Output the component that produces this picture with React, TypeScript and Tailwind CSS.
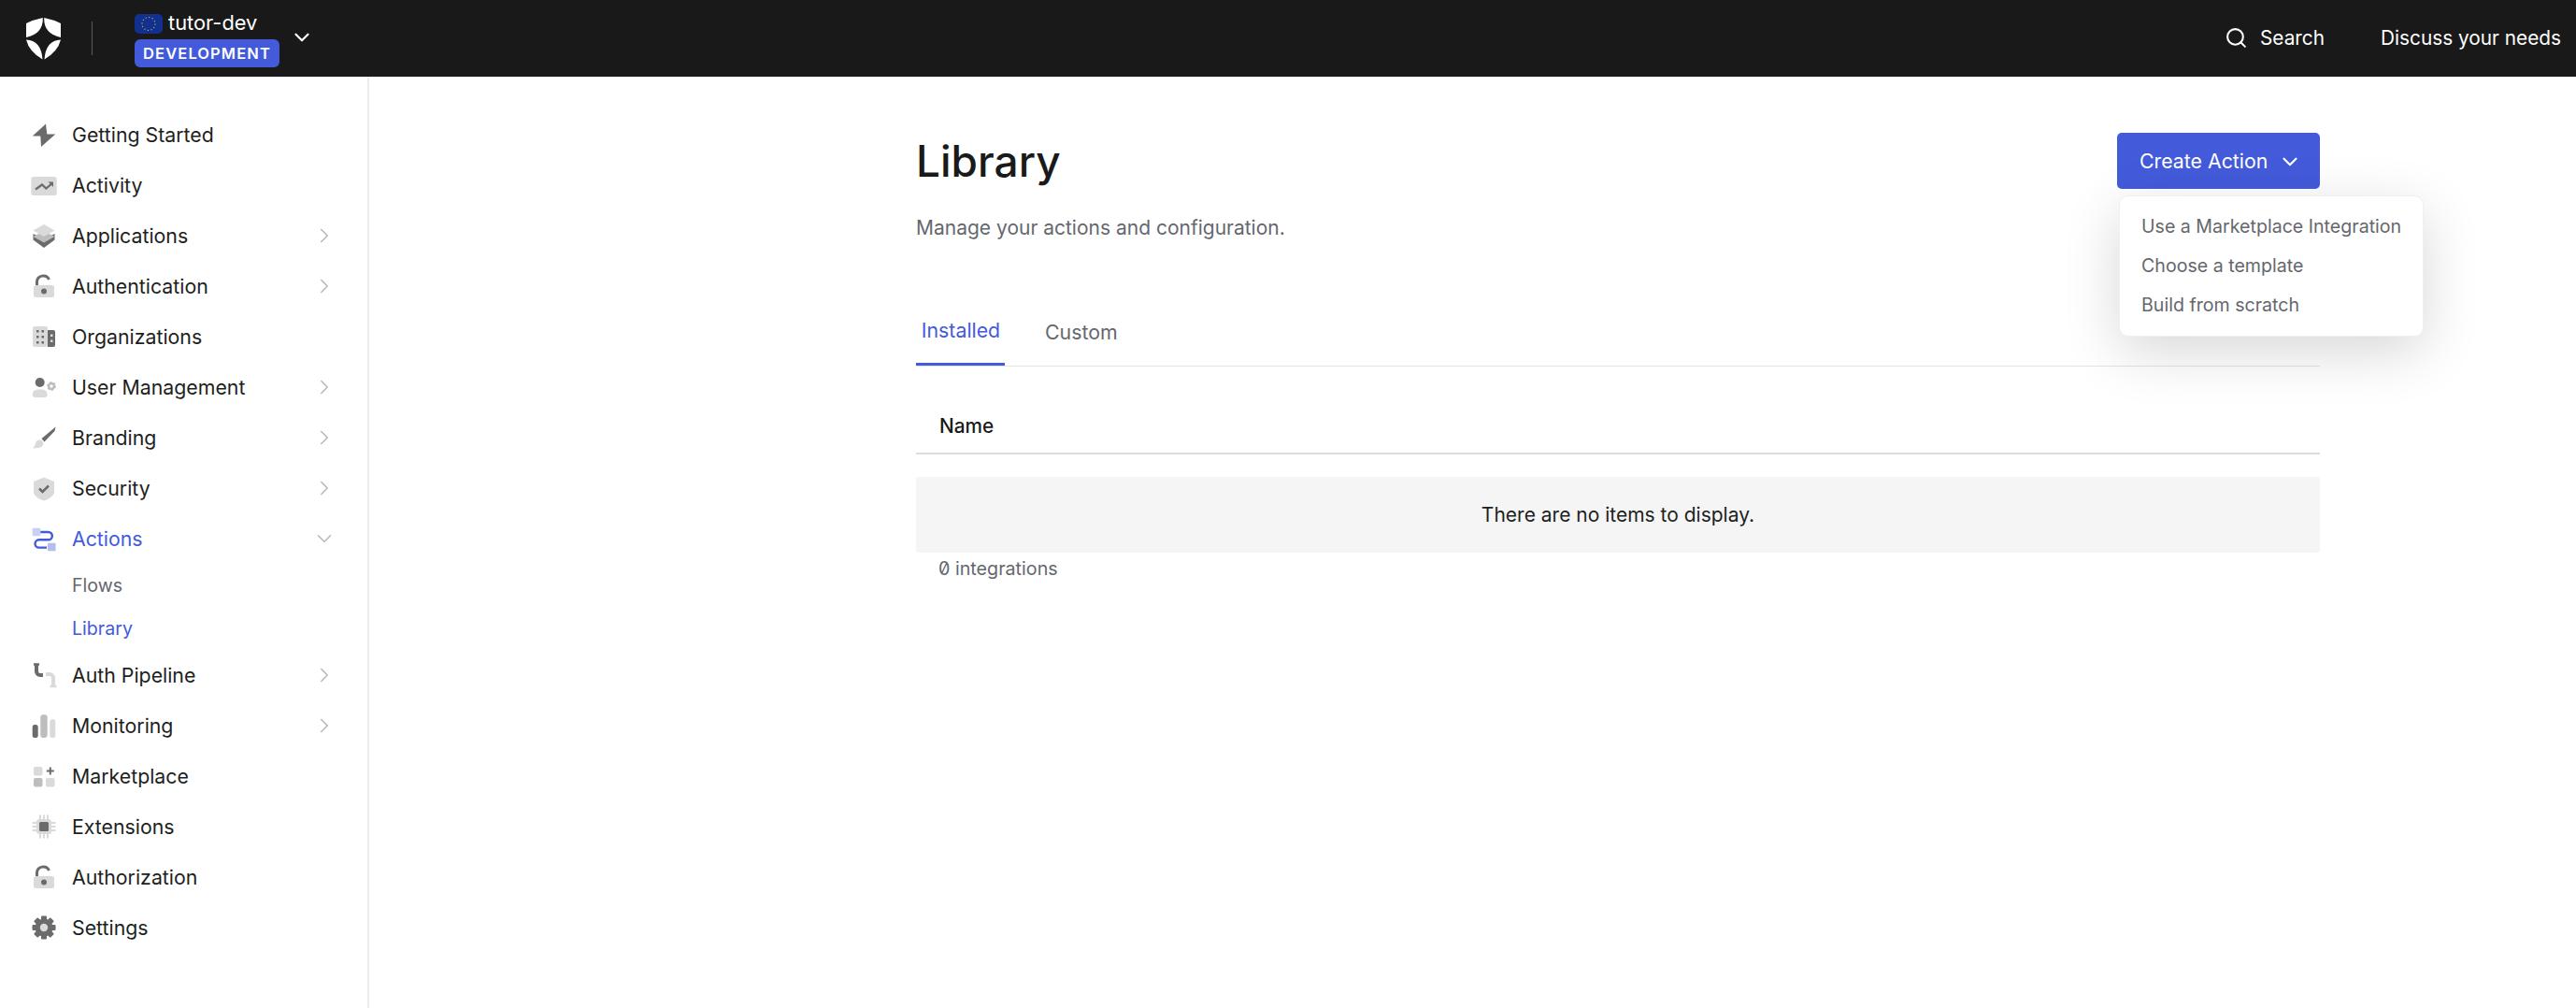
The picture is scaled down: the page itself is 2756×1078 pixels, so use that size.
import { ChevronDown, ChevronRight, Search } from 'lucide-react';

const D = '#6b6b6b';
const M = '#bdbdbd';
const L = '#dadada';
const BLUE = '#435bdb';

function Box({ children }: { children: React.ReactNode }) {
  return (
    <svg viewBox="0 0 26 26" className="w-[26px] h-[26px] overflow-visible shrink-0">
      {children}
    </svg>
  );
}

function Lock() {
  return (
    <Box>
      <path d="M5.500 13V8.500a6.800 6.800 0 0 1 13-2.500" fill="none" stroke={D} strokeWidth="3" />
      <rect x="2" y="12" width="22" height="13" rx="2.500" fill={L} />
      <circle cx="13" cy="18.500" r="3" fill={D} />
    </Box>
  );
}

function Gear() {
  const angles = [0, 45, 90, 135];
  return (
    <Box>
      {angles.map((a) => (
        <rect key={a} x="10" y="0.500" width="6" height="25" rx="1" fill={D} transform={`rotate(${a} 13 13)`} />
      ))}
      <circle cx="13" cy="13" r="9.500" fill={D} />
      <circle cx="13" cy="13" r="4.200" fill={L} />
    </Box>
  );
}

const icons: Record<string, React.ReactNode> = {
  'Getting Started': (
    <Box>
      <path d="M15 1.500 .8 14.500h8.500L10 26l15.300-13.500h-9z" fill={D} />
    </Box>
  ),
  Activity: (
    <Box>
      <rect x="-0.700" y="4" width="27.400" height="20" rx="2.500" fill={L} />
      <path d="M4 17.500l7-5 4.300 4L22 11" fill="none" stroke={D} strokeWidth="2.200" />
      <path d="M17.500 9.500h5.500V15z" fill={D} />
    </Box>
  ),
  Applications: (
    <Box>
      <path d="M13 17 1.500 11v6.500L13 26l11.500-8.500V11z" fill={D} />
      <path d="M13 8 1.500 14 13 20.500 24.500 14z" fill={M} />
      <path d="M13 1 1.500 7.500 13 14 24.500 7.500z" fill={L} />
    </Box>
  ),
  Authentication: <Lock />,
  Organizations: (
    <Box>
      <rect x="1" y="2" width="16" height="22" rx="2" fill={L} />
      <path d="M17 6h6a2 2 0 0 1 2 2v14a2 2 0 0 1-2 2h-6z" fill={D} />
      <path d="M5 6h2.500v2.500H5zM10.500 6H13v2.500h-2.500zM5 12h2.500v2.500H5zM10.500 12H13v2.500h-2.500zM5 18h2.500v2.500H5zM10.500 18H13v2.500h-2.500z" fill={D} />
      <path d="M20 10.500h2.500V13H20zM20 16.500h2.500V19H20z" fill={L} />
    </Box>
  ),
  'User Management': (
    <Box>
      <circle cx="8.700" cy="8" r="5" fill={D} />
      <path d="M.7 21a5.500 5.500 0 0 1 5.500-5.500h5A5.500 5.500 0 0 1 16.700 21c0 2-1 3-3 3h-10c-2 0-3-1-3-3z" fill={L} />
      <circle cx="21" cy="12" r="3" fill="none" stroke={M} strokeWidth="2.500" />
      <circle cx="21" cy="12" r="4.300" fill="none" stroke={M} strokeWidth="1.200" strokeDasharray="2 2.500" />
    </Box>
  ),
  Branding: (
    <Box>
      <path d="M25.500 1.500 10.500 14l3 3.500 11-11.500z" fill={D} />
      <path d="M9.500 15.500c-3-.5-5 1-5.500 3.500-.5 2.500-1.500 4-3 5 4.500.7 9.500 0 11-3 1-2.500 0-4.500-2.500-5.500z" fill={L} />
    </Box>
  ),
  Security: (
    <Box>
      <path d="M13 1.500 24 6v11c0 4-5 7.500-11 9.500C7 24.500 2 21 2 17V6z" fill={L} />
      <path d="M8 13.500l3.500 3.500 6.500-6.500" fill="none" stroke={D} strokeWidth="2.500" />
    </Box>
  ),
  Actions: (
    <Box>
      <rect x="0.700" y="1.700" width="8.600" height="8.600" rx="1" fill="#c9d0f6" />
      <rect x="17" y="17.700" width="8.600" height="8.600" rx="1" fill="#b3bdf2" />
      <path d="M9.300 6h8.400a4.150 4.150 0 0 1 0 8.300h-10a4.150 4.150 0 0 0 0 8.300H16" fill="none" stroke={BLUE} strokeWidth="2.400" />
    </Box>
  ),
  'Auth Pipeline': (
    <Box>
      <path d="M5 2v7a4 4 0 0 0 4 4h3" fill="none" stroke={D} strokeWidth="4" />
      <path d="M2 1.500h6" stroke={D} strokeWidth="2.500" />
      <path d="M15 12h4a4 4 0 0 1 4 4v8" fill="none" stroke={L} strokeWidth="4" />
      <path d="M19.500 25h7" stroke={L} strokeWidth="2.500" />
    </Box>
  ),
  Monitoring: (
    <Box>
      <rect x="0.700" y="12" width="6" height="14" rx="2.500" fill={D} />
      <rect x="9.300" y="1.300" width="7.400" height="24.700" rx="3" fill={M} />
      <rect x="19.300" y="6.300" width="6" height="19.700" rx="2.500" fill={L} />
    </Box>
  ),
  Marketplace: (
    <Box>
      <rect x="2" y="3" width="9.500" height="9.500" rx="2" fill={L} />
      <rect x="2" y="15" width="9.500" height="9.500" rx="2" fill={M} />
      <rect x="15" y="15" width="9.500" height="9.500" rx="2" fill={L} />
      <path d="M19.800 3.500v8M15.800 7.500h8" stroke={D} strokeWidth="2" />
    </Box>
  ),
  Extensions: (
    <Box>
      <path d="M9 .5v25M13 .5v25M17 .5v25M.5 9h25M.5 13h25M.5 17h25" stroke={L} strokeWidth="2" />
      <rect x="5" y="5" width="16" height="16" rx="3" fill={L} />
      <rect x="8" y="8" width="10" height="10" rx="1.500" fill={D} />
    </Box>
  ),
  Authorization: <Lock />,
  Settings: <Gear />,
};

const navTop = [
  { label: 'Getting Started' },
  { label: 'Activity' },
  { label: 'Applications', arrow: true },
  { label: 'Authentication', arrow: true },
  { label: 'Organizations' },
  { label: 'User Management', arrow: true },
  { label: 'Branding', arrow: true },
  { label: 'Security', arrow: true },
];

const navBottom = [
  { label: 'Auth Pipeline', arrow: true },
  { label: 'Monitoring', arrow: true },
  { label: 'Marketplace' },
  { label: 'Extensions' },
  { label: 'Authorization' },
  { label: 'Settings' },
];

function NavRow({ label, arrow }: { label: string; arrow?: boolean }) {
  return (
    <div className="flex items-center h-[54px] pl-[34px] pr-[33px] gap-[17px] text-[21.3px] text-[#1e1f21]">
      {icons[label]}
      <span className="flex-1 pt-[2px]">{label}</span>
      {arrow && <ChevronRight className="w-[26px] h-[26px] text-[#b4b4b4]" strokeWidth={1.3} />}
    </div>
  );
}

export default function App() {
  return (
    <div className="h-[1078px] w-[2756px] overflow-hidden bg-white font-['Inter',sans-serif] flex flex-col">
      <header className="h-[82px] shrink-0 bg-[#191919] flex items-center text-white pl-[28px] pr-[16px]">
        <svg viewBox="0 0 37 45" className="w-[37px] h-[45px] shrink-0">
          <path d="M0 6Q8 2 17.800 0Q18.500 17 0 21Z" fill="#fff" />
          <path d="M37 6Q29 2 19.200 0Q18.500 17 37 21Z" fill="#fff" />
          <path d="M0 23.500Q16 24 17.500 44.500Q3 36 0 23.500Z" fill="#fff" />
          <path d="M37 23.500Q21 24 19.500 44.500Q34 36 37 23.500Z" fill="#fff" />
        </svg>
        <div className="w-[1px] h-[36px] bg-[#5a5a5a] ml-[33px] mr-[45px]" />
        <div className="flex flex-col gap-[6px] mt-[4px]">
          <div className="flex items-center gap-[6px] h-[22px]">
            <svg viewBox="0 0 30 21" className="w-[30px] h-[21px]">
              <rect width="30" height="21" rx="5" fill="#12308f" />
              <circle cx="15" cy="10.500" r="7" fill="none" stroke="#e3c02a" strokeWidth="1.100" strokeDasharray="1.100 2.560" />
            </svg>
            <span className="text-[21.800px] leading-none">tutor-dev</span>
          </div>
          <span className="h-[30px] w-[155px] flex items-center justify-center rounded-[6px] bg-[#435bdb] text-[16.500px] font-semibold tracking-[1.100px]">
            DEVELOPMENT
          </span>
        </div>
        <ChevronDown className="w-[26px] h-[26px] ml-[11px] mt-[-2px]" strokeWidth={2} />
        <div className="flex-1" />
        <Search className="w-[25px] h-[25px] mt-[-1px]" strokeWidth={2} />
        <span className="text-[20.800px] ml-[13px]">Search</span>
        <span className="text-[20.800px] ml-[60px]">Discuss your needs</span>
      </header>
      <div className="flex flex-1 min-h-0">
        <aside className="w-[395px] shrink-0 border-r-2 border-[#ececec] pt-[35px]">
          {navTop.map((n) => (
            <NavRow key={n.label} {...n} />
          ))}
          <div className="flex items-center h-[54px] pl-[34px] pr-[33px] gap-[17px] text-[21.300px] text-[#435bdb]">
            {icons.Actions}
            <span className="flex-1 pt-[2px]">Actions</span>
            <ChevronDown className="w-[26px] h-[26px] text-[#b4b4b4]" strokeWidth={1.3} />
          </div>
          <div className="h-[46px] flex items-center pl-[77px] pt-[2px] text-[19.600px] text-[#65676e]">Flows</div>
          <div className="h-[46px] flex items-center pl-[77px] pt-[2px] text-[19.600px] text-[#435bdb]">Library</div>
          {navBottom.map((n) => (
            <NavRow key={n.label} {...n} />
          ))}
        </aside>
        <main className="flex-1 pl-[585px] pt-[60px]">
          <div className="w-[1502px]">
            <div className="flex items-start justify-between h-[60px]">
              <h1 className="text-[46px] font-medium leading-[60px] text-[#1a1a1a]">Library</h1>
              <div className="relative">
                <button className="h-[60px] w-[217px] bg-[#435bdb] rounded-[5px] text-white text-[21.300px] flex items-center pl-[24px] pt-[1px] gap-[11px] whitespace-nowrap">
                  Create Action
                  <ChevronDown className="w-[26px] h-[26px]" strokeWidth={2} />
                </button>
                <div className="absolute left-[2px] top-[67px] w-[326px] h-[151px] rounded-[10px] bg-white border border-[#f0f0f0] shadow-[0_16px_60px_rgba(0,0,0,0.16)] pl-[23px] pt-[12px] text-[19.600px] text-[#65676e]">
                  <div className="h-[42px] flex items-center whitespace-nowrap">Use a Marketplace Integration</div>
                  <div className="h-[42px] flex items-center whitespace-nowrap">Choose a template</div>
                  <div className="h-[42px] flex items-center whitespace-nowrap">Build from scratch</div>
                </div>
              </div>
            </div>
            <p className="mt-[28px] text-[21px] leading-[28px] text-[#65676e]">Manage your actions and configuration.</p>
            <div className="mt-[55px] flex h-[79px] border-b border-[#e3e3e3] text-[21.300px]">
              <div className="h-[78px] w-[95px] flex items-center justify-center text-[#435bdb] border-b-[3px] border-[#435bdb] pt-[7px]">
                <span className="pl-[1px]">Installed</span>
              </div>
              <div className="h-[78px] flex items-center ml-[43px] text-[#65676e] pt-[7px]">Custom</div>
            </div>
            <div className="h-[94px] border-b-2 border-[#dcdcdc] flex items-center pl-[25px] pt-[36px] text-[20.800px] font-medium text-[#1a1a1a]">
              Name
            </div>
            <div className="mt-[24px] h-[81px] rounded-[3px] bg-[#f5f5f5] flex items-center justify-center text-[21px] text-[#1e1f21]">
              There are no items to display.
            </div>
            <div className="mt-[4px] pl-[24px] text-[19.700px] leading-[26px] text-[#65676e] slashed-zero">0 integrations</div>
          </div>
        </main>
      </div>
    </div>
  );
}
